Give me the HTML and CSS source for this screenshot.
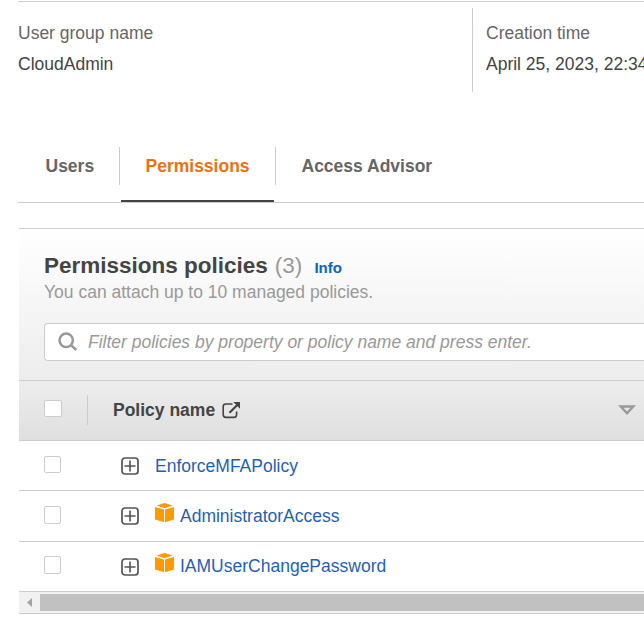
FILE: index.html
```html
<!DOCTYPE html>
<html lang="en">
<head>
<meta charset="utf-8">
<title>CloudAdmin</title>
<link rel="stylesheet" href="styles.css">
</head>
<body>
<svg class="symbols" aria-hidden="true">
  <symbol id="expand" viewBox="0 0 18 18"><rect x="1" y="1" width="16" height="16" rx="3" fill="none" stroke="#545454" stroke-width="1.7"/><path d="M9 3.5v11M3.5 9h11" stroke="#545454" stroke-width="1.6"/></symbol>
  <symbol id="cube" viewBox="0 0 20 20"><path fill="#ff9900" d="M9.5 0l8 2.6-8 2.7-8-2.7zM0 4l9 2.5v12.7L0 16.6zM19 4v12.6l-9 2.6V6.5z"/></symbol>
</svg>
<section class="summary">
  <div class="field"><div class="label">User group name</div><div>CloudAdmin</div></div>
  <div class="field created"><div class="label">Creation time</div><div>April 25, 2023, 22:34</div></div>
</section>
<nav class="tabs">
  <a class="tab users">Users</a>
  <i class="sep"></i>
  <a class="tab active">Permissions</a>
  <i class="sep"></i>
  <a class="tab advisor">Access Advisor</a>
</nav>
<main class="panel">
  <header class="top">
    <h1>Permissions policies <span class="count">(3)</span><a class="info">Info</a></h1>
    <p>You can attach up to 10 managed policies.</p>
    <div class="search">
      <svg width="20" height="20" viewBox="0 0 20 20" fill="none" stroke="#999" stroke-width="2.5"><circle cx="8.2" cy="8.3" r="6.7"/><path d="M12.8 12.8l5.5 5.2"/></svg>
      <span>Filter policies by property or policy name and press enter.</span>
    </div>
  </header>
  <div class="head">
    <i class="check"></i><i class="colsep"></i><b>Policy name</b>
    <svg class="external" width="19" height="17" viewBox="0 0 19 17" fill="none" stroke="#444" stroke-width="1.6"><path d="M10.5 2H3.8Q1.2 2 1.2 4.6v8Q1.2 15.4 4 15.4h8Q14.6 15.4 14.6 12.6V9.5"/><path d="M7.5 10.8l8-8" stroke-width="2.2"/><path d="M11.3 0H18v6.7z" fill="#444" stroke="none"/></svg>
    <svg class="sort" width="18" height="11" viewBox="0 0 18 11" fill="none" stroke="#999" stroke-width="2.4"><path d="M2.8 1.5h12.4L9 8.2z"/></svg>
  </div>
  <div class="row"><i class="check"></i><svg class="expand"><use href="#expand"/></svg><a>EnforceMFAPolicy</a></div>
  <div class="row tall"><i class="check"></i><svg class="expand"><use href="#expand"/></svg><svg class="cube"><use href="#cube"/></svg><a>AdministratorAccess</a></div>
  <div class="row last"><i class="check"></i><svg class="expand"><use href="#expand"/></svg><svg class="cube"><use href="#cube"/></svg><a>IAMUserChangePassword</a></div>
  <div class="scroll"><svg width="21" height="21"><path d="M13 6v9l-5-4.5z" fill="#a3a3a3"/></svg><div class="thumb"></div></div>
</main>
</body>
</html>
```
FILE: styles.css
```css
* { box-sizing: border-box; }
body { margin: 0; width: 644px; height: 623px; overflow: hidden; background: #fff; color: #444; font: 17.5px/22px "Liberation Sans", Arial, sans-serif; white-space: nowrap; }
.symbols { display: none; }
svg, i { display: block; flex: none; }
.summary { margin: 1px 0 0 18px; border-top: 1px solid #ccc; height: 146px; display: flex; align-items: flex-start; padding-top: 6px; }
.field { width: 454px; flex: none; height: 84px; padding-top: 14px; line-height: 22px; }
.label { color: #666; margin-bottom: 9px; }
.created { width: 172px; overflow: hidden; border-left: 1px solid #ccc; padding-left: 13px; }
.tabs { margin-left: 18px; height: 56px; border-bottom: 1px solid #ccc; display: flex; font-weight: bold; color: #666; }
.tab { padding-top: 8px; height: 55px; }
.users { width: 101px; padding-left: 27.5px; }
.sep { width: 1px; height: 38px; background: #ccc; }
.active { color: #ec7211; width: 153px; margin: 0 1px; border-bottom: 2px solid #444; padding-left: 24.5px; }
.advisor { padding-left: 25.5px; }
.panel { margin: 25px 0 0 19px; border-top: 1px solid #ccc; }
.top { height: 151px; padding: 24px 0 0 25px; background: linear-gradient(#fff, #ededed); }
h1 { margin: 0; font-size: 22.5px; line-height: 26px; }
.count { font-weight: normal; color: #999; margin-left: 0.6px; }
.info { font-size: 15px; color: #0a64c0; margin-left: 12.2px; }
p { margin: 0 0 20px; color: #999; }
.search { height: 38px; border: 1px solid #ccc; border-right: 0; border-radius: 4px 0 0 4px; background: #fff; display: flex; align-items: center; padding-left: 12.5px; color: #999; font-style: italic; }
.search span { margin-left: 10.5px; }
.head { height: 61px; border: solid #ccc; border-width: 1px 0; background: linear-gradient(#ededed, #dfdfdf); display: flex; align-items: center; padding: 0 0 1px 25px; }
.check { width: 17px; height: 17px; border: 1px solid #ccc; border-radius: 2px; background: #fff; }
.head .check { width: 18px; margin-bottom: 3px; }
.colsep { width: 1px; height: 30px; background: #ccc; margin: 0 25px; }
.external { margin-left: 7px; }
.sort { margin-left: auto; margin-right: 8px; }
.row { height: 50px; border-bottom: 1px solid #ccc; display: flex; align-items: center; padding-left: 25px; color: #1f5fb8; }
.row .check { margin: 0 60px 2px 0; }
.tall { height: 51px; }
.row.tall .check, .row.last .check { height: 18px; margin-bottom: 3px; }
.expand { width: 18px; height: 18px; margin-right: 16px; }
.cube { width: 20px; height: 20px; margin: 0 5px 6px 0; }
.last .cube { margin-bottom: 7px; }
.last a { margin-bottom: 2px; }
.row a { display: block; }
.scroll { height: 22px; border-bottom: 1px solid #ccc; background: #f1f1f1; display: flex; align-items: center; }
.thumb { flex: 1; height: 17px; background: #c1c1c1; }
```
